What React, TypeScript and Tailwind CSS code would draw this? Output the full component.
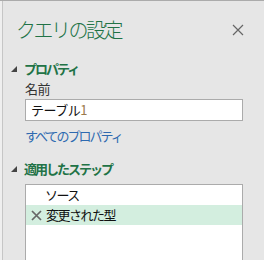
import React from "react"

const jp = "font-['Noto_Sans_CJK_JP',sans-serif]"

function Caret() {
  return (
    <svg width="6" height="6" viewBox="0 0 6 6" className="shrink-0">
      <polygon points="6,0 6,6 0,6" fill="#444" />
    </svg>
  )
}

function SectionHeader({ label }: { label: string }) {
  return (
    <div className="h-[20px] flex items-center pl-[8px] gap-[7px]">
      <Caret />
      <span className="text-[13px] leading-[20px] font-bold text-[#217346] tracking-[-2px]">{label}</span>
    </div>
  )
}

export default function App() {
  return (
    <div className={`w-[264px] h-[260px] overflow-hidden bg-[#efefef] border-t border-[#ababab] pl-[2px] flex ${jp}`}>
      <div className="flex-1 flex flex-col bg-[#e6e6e6] border-l border-[#c6c6c6]">
        {/* タイトル */}
        <div className="mt-[15px] h-[28px] flex items-center justify-between pl-[13px] pr-[20px]">
          <span className="text-[20px] leading-[28px] font-light text-[#217346] tracking-[-2.5px]">クエリの設定</span>
          <svg width="12" height="12" viewBox="0 0 12 12">
            <path d="M1 1 L11 11 M11 1 L1 11" stroke="#666" strokeWidth="1.2" />
          </svg>
        </div>

        <div className="mt-[15px]">
          <SectionHeader label="プロパティ" />
        </div>
        <div className="h-[20px] pl-[22px] text-[13px] leading-[20px] text-[#333] tracking-[-0.5px]">名前</div>
        <div className="ml-[22px] w-[218px] h-[22px] bg-white border border-[#ababab] flex items-center pl-[5px]">
          <span className="text-[13px] text-[#111] tracking-[-0.5px]">
            テーブル<span className="text-[#9a7a4a]">1</span>
          </span>
        </div>
        <div className="mt-[5px] h-[20px] pl-[22px] text-[13px] leading-[20px] text-[#2e6ab0] tracking-[-2px]">
          すべてのプロパティ
        </div>

        <div className="mt-[13px]">
          <SectionHeader label="適用したステップ" />
        </div>
        <div className="mt-[5px] ml-[22px] w-[218px] flex-1 bg-white border border-[#ababab] border-b-0">
          <div className="h-[20px] flex items-center pl-[19px] text-[13px] text-[#111] tracking-[-1.5px]">ソース</div>
          <div className="h-[20px] flex items-center bg-[#d3eedf] pl-[5px] gap-[4px] text-[13px] text-[#111] tracking-[-1.5px]">
            <svg width="11" height="11" viewBox="0 0 11 11" className="shrink-0">
              <path d="M1 1 L10 10 M10 1 L1 10" stroke="#666" strokeWidth="1.7" />
            </svg>
            <span>変更された型</span>
          </div>
        </div>
      </div>
    </div>
  )
}
